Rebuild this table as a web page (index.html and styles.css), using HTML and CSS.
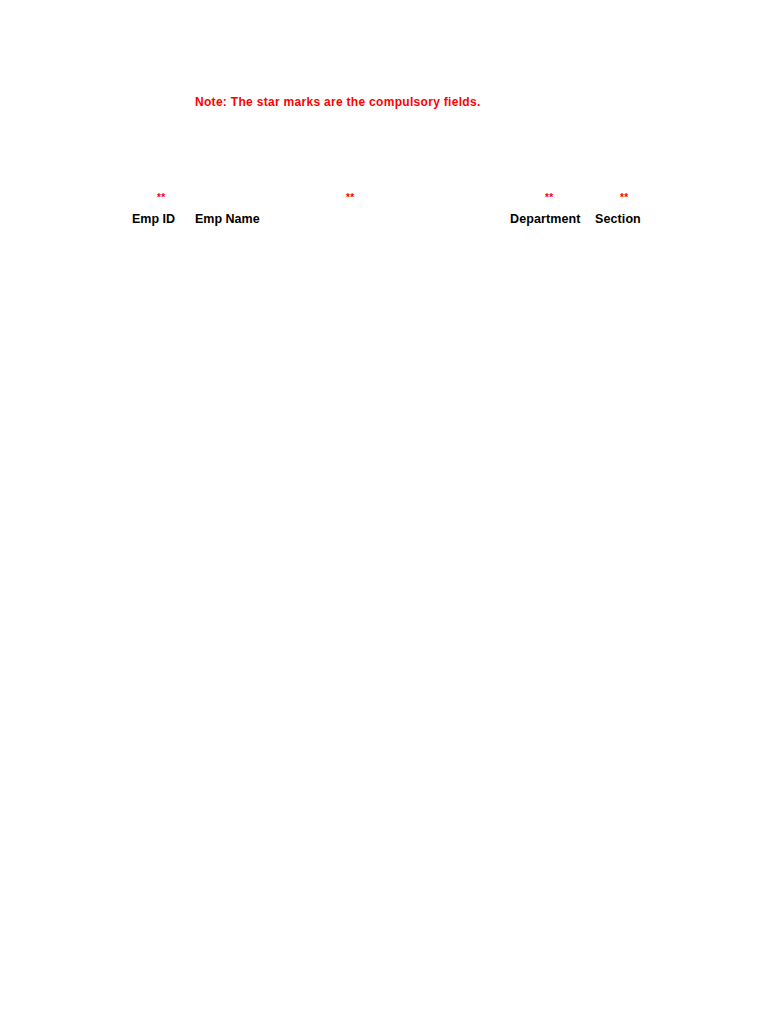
FILE: index.html
```html
<!DOCTYPE html>
<html>
<head>
<meta charset="utf-8">
<link rel="stylesheet" href="styles.css">
</head>
<body>
<div class="page">
  <p class="note">Note: The star marks are the compulsory fields.</p>
  <div class="fields">
    <span class="star s1">**</span>
    <span class="star s2">**</span>
    <span class="star s3">**</span>
    <span class="star s4">**</span>
    <span class="label l1">Emp ID</span>
    <span class="label l2">Emp Name</span>
    <span class="label l3">Department</span>
    <span class="label l4">Section</span>
  </div>
</div>
</body>
</html>
```
FILE: styles.css
```css
html, body {
  margin: 0;
  padding: 0;
  background: #ffffff;
}
.page {
  font-family: "Liberation Sans", Arial, sans-serif;
  font-weight: bold;
  font-size: 12px;
  letter-spacing: 0.3px;
  padding-top: 94px;
}
.note {
  margin: 0 0 0 195px;
  color: #ff0000;
  line-height: 16px;
}
.fields {
  margin-top: 78px;
  display: grid;
  grid-template-columns: 128px 59px 313px 90px 60px;
  grid-template-rows: 21px 20px;
}
.star {
  color: #ff0000;
  font-size: 10px;
  line-height: 20px;
}
.label {
  color: #000000;
  font-size: 12.5px;
  line-height: 20px;
}
.s1 { grid-column: 2; grid-row: 1; padding-left: 29px; }
.s2 { grid-column: 3; grid-row: 1; padding-left: 159px; }
.s3 { grid-column: 4; grid-row: 1; padding-left: 45px; }
.s4 { grid-column: 5; grid-row: 1; padding-left: 30px; }
.l1 { grid-column: 2; grid-row: 2; padding-left: 4px; letter-spacing: 0; }
.l2 { grid-column: 3; grid-row: 2; padding-left: 8px; letter-spacing: 0; }
.l3 { grid-column: 4; grid-row: 2; padding-left: 10px; letter-spacing: 0.1px; }
.l4 { grid-column: 5; grid-row: 2; padding-left: 5px; letter-spacing: 0.1px; }
```
